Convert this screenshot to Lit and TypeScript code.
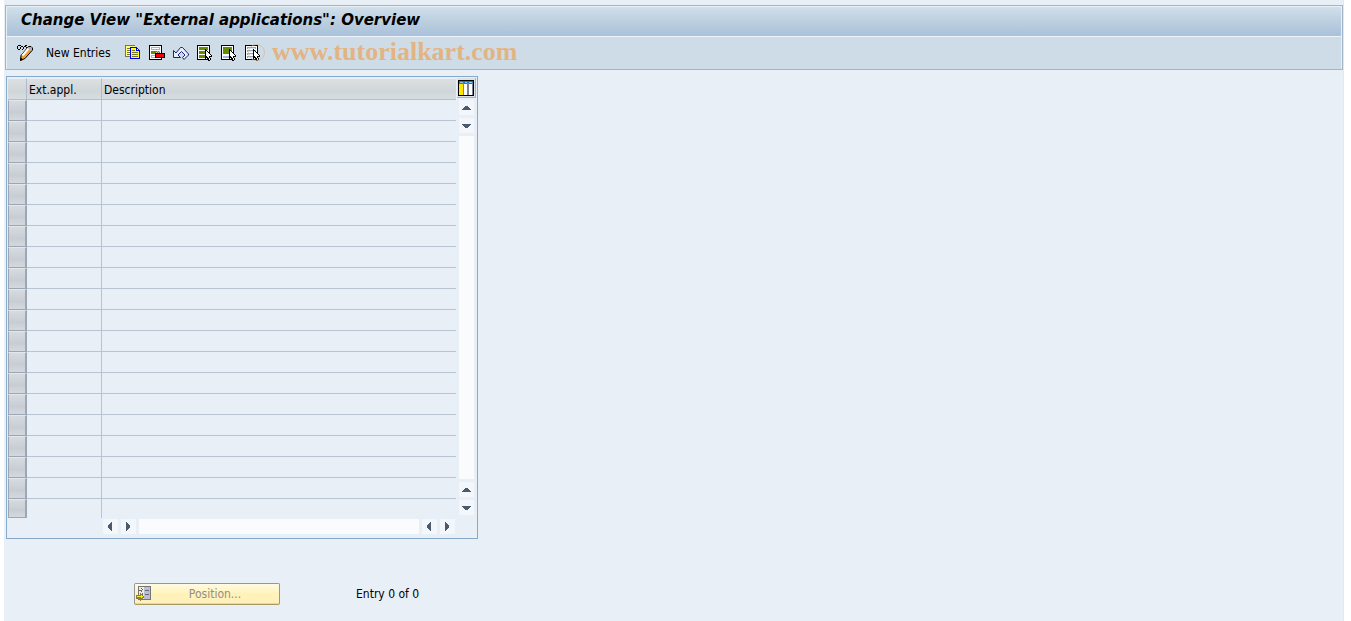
import { LitElement, html, svg, css } from "lit";
import { customElement, property } from "lit/decorators.js";

const icon = (content: unknown, size = 18) => html`
  <svg width=${size} height=${size} viewBox="0 0 ${size} ${size}" shape-rendering="crispEdges" aria-hidden="true">${content}</svg>`;

const page = svg`
  <path d="M1 1h13v15H1z" fill="#000"/>
  <path d="M2 2h11v13H2z" fill="#fff"/>`;
const pointer = svg`
  <path d="M9 5h1v1h1v1h1v1h1v1h1v1h1v1h1v2h-2v1h1v2h-1v1h-2v-2h-1v-1h-1v1H9z" fill="#000"/>
  <path d="M10 7h1v1h1v1h1v1h1v1h1v1h-2v2h1v2h-1v-2h-1v-1h-1v-1h-1z" fill="#fff"/>`;

const icons = {
  toggle: icon(svg`
    <path d="M1 2h1v1H1zM2 1h3v1H2zM1 3h1v2H1zM2 5h2v1H2zM4 3h1v2H4zM5 2h2v1H5zM7 3h1v2H7zM6 5h1v1H6zM8 2h2v1H8zM9 1h2v1H9zM10 3h1v1h-1z" fill="#000"/>
    <g shape-rendering="auto">
      <path d="M12.500 2.500h2.500l1.500 1.500v2l-7.500 8.500-4.500 2 .5-5z" fill="#f6a02c" stroke="#000"/>
      <path d="M12.500 4.500l-6 7" stroke="#fff" stroke-width="2"/>
      <path d="M12 4l1-1h2l1 1v2l-1 1z" fill="#9db4df"/>
      <path d="M4 17l.8-3.500 2.500 2z" fill="#000"/>
    </g>`),
  copy: icon(svg`
    <path d="M1 1h10v12H1z" fill="#ffff78"/>
    <path d="M1 1h10v1H1zM1 2h1v11H1zM2 12h5v1H2z" fill="#777740"/>
    <path d="M3 4h3v1H3zM3 6h3v1H3zM3 8h3v1H3zM3 10h3v1H3z" fill="#77773c"/>
    <path d="M6 3h7v1h1v1h1v1h1v9H6z" fill="#0000e8"/>
    <path d="M7 4h5v3h3v7H7z" fill="#ffff20"/>
    <path d="M13 5h1v1h-1z" fill="#fff"/>
    <path d="M8 6h3v1H8zM8 8h6v1H8zM8 10h6v1H8zM8 12h6v1H8z" fill="#77771c"/>`),
  remove: icon(svg`${page}
    <path d="M3 3h9v3H3zM3 11h9v3H3z" fill="#a4b4d0"/>
    <path d="M4 4h7v1H4zM4 12h7v1H4z" fill="#fff"/>
    <path d="M3 7h9v3H3z" fill="#668c00"/>
    <path d="M9 7h1v1H9zM8 8h1v1H8zM10 8h1v1h-1zM11 7h1v1h-1z" fill="#bdd28b"/>
    <path d="M7 9h10v5H7z" fill="#000"/><path d="M8 10h8v3H8z" fill="#f00000"/>`),
  undo: icon(svg`
    <path d="M1.500 6.500v7h7l-2.500-2.500 3.500-3.500 3.500 3.500-2.500 2.500 1.500 2 4.500-4.500v-1l-6-6.500h-2l-4.500 5.500z"
      shape-rendering="auto" fill="#e7eff8" stroke="#202080"/>`),
  selectAll: icon(svg`${page}
    <path d="M3 3h9v3H3zM3 7h9v3H3zM3 11h9v3H3z" fill="#668c00"/>${pointer}`),
  selectBlock: icon(svg`${page}
    <path d="M3 3h9v7H3z" fill="#668c00"/>
    <path d="M3 12h9v2H3z" fill="#a4b9d0"/>${pointer}`),
  deselect: icon(svg`${page}
    <path d="M3 3h9v2H3zM3 6h9v2H3zM3 9h9v2H3zM3 12h9v2H3z" fill="#8fa6bd"/>
    <path d="M4 4h7v1H4zM4 7h7v1H4zM4 10h7v1H4zM4 13h7v1H4z" fill="#dfe9f2"/>${pointer}`),
  columns: icon(svg`
    <path d="M1 1h16v16H1z" fill="#000"/>
    <path d="M2 2h14v3H2z" fill="#2779bd"/>
    <path d="M2 5h5v11H2z" fill="#ffe500"/>
    <path d="M7 5h4v11H7zM12 5h4v11h-4z" fill="#fff"/>
    <path d="M6 4h1v12H6zM10 4h2v12h-2zM15 4h1v12h-1z" fill="#7d828c"/>
    <path d="M3 3h3v1H3zM8 3h2v1H8zM12 3h3v1h-3z" fill="#8cc8f4"/>`),
  position: icon(svg`
    <path d="M3 1h13v14H3z" fill="#74747c"/>
    <path d="M4 2h5v12H4z" fill="#eeeed8"/><path d="M9 2h6v12H9z" fill="#babed2"/>
    <path d="M4 5h3v1H4zM6 3h1v1H6zM7 4h1v1H7zM6 6h1v1H6zM10 5h4v1h-4zM10 9h4v1h-4zM7 8h1v3H7z" fill="#666878"/>
    <path d="M1 10h4V8h1v1h1v1h1v1h1v2H8v1H7v1H6v1H5v-2H1z" fill="#877d46"/>
    <path d="M2 11h4v-1h1v1h1v1H7v1H6v-1H2z" fill="#fff200"/>`),
};

const arrows: Record<string, string> = {
  up: "M3 10h9v-1h-1V8h-1V7H9V6H6v1H5v1H4v1H3z",
  down: "M3 6h9v1h-1v1h-1v1H9v1H6V9H5V8H4V7H3z",
  left: "M9 3v9H8v-1H7v-1H6V9H5V6h1V5h1V4h1V3z",
  right: "M5 3v9h1v-1h1v-1h1V9h1V6H8V5H7V4H6V3z",
};

@customElement("scroll-strip")
class ScrollStrip extends LitElement {
  @property({ type: Boolean, reflect: true }) vertical = false;

  static styles = css`
    :host { display: flex; gap: 3px; }
    :host([vertical]) { flex-direction: column; }
    button {
      flex: none; width: 15px; height: 15px; padding: 0; border: 0;
      background: #f3f7fb; line-height: 0;
    }
    .track { flex: 1; min-width: 15px; min-height: 15px; background: #fafbfc; }
  `;

  private arrow(direction: string) {
    return html`<button type="button" aria-label="Scroll ${direction}">
      ${icon(svg`<path d=${arrows[direction]} fill="#4a5b6d"/>`, 15)}
    </button>`;
  }

  render() {
    const back = this.vertical ? "up" : "left";
    const forward = this.vertical ? "down" : "right";
    return html`${this.arrow(back)}${this.arrow(forward)}
      <div class="track"></div>${this.arrow(back)}${this.arrow(forward)}`;
  }
}

@customElement("app-root")
class AppRoot extends LitElement {
  static styles = css`
    * { box-sizing: border-box; }
    :host {
      display: flex; min-height: 100vh; padding: 0 7px 0 4px; box-sizing: border-box;
      background: #fff; color: #000;
      font: 12px/16px "DejaVu Sans Condensed", "Noto Sans", sans-serif;
    }
    button { font: inherit; color: inherit; }
    .window {
      flex: 1; min-width: 0; padding: 5px 0 0 1px; background: #e8eff6;
      border-right: 1px solid #e0e8f0;
    }
    .head {
      position: relative; border: 1px solid #a2b4c8;
      box-shadow: inset 1px 1px #e8f0f6, inset -1px 0 #e8f0f6;
      background: #cedce7;
    }
    h1 {
      margin: 1px 1px 0; padding: 2px 14px 0; height: 29px;
      font: italic bold 15px/22px "DejaVu Sans", sans-serif;
      background: linear-gradient(#d0dfec, #bccfdf 50%, #a9c1dc);
    }
    .toolbar {
      display: flex; align-items: center; height: 33px; padding: 0 7px;
      margin: 0 1px; border-top: 1px solid #edf4f9;
    }
    .toolbar button {
      padding: 0; border: 0; background: none; width: 24px; height: 24px;
      display: flex; align-items: center; justify-content: center;
    }
    .toolbar .text { width: auto; padding: 0 10px; }
    .toolbar .toggle { width: 22px; }
    .watermark {
      position: absolute; left: 242px; bottom: 2px; pointer-events: none;
      font: bold 26px/30px "Liberation Serif", serif; color: #e3b483;
      display: flex; align-items: center; gap: 7px;
    }
    .ring {
      width: 17px; height: 17px; border: 1px solid #e3b483; border-radius: 50%; opacity: .7;
    }
    .panel {
      display: inline-grid; grid-template-columns: auto 19px; gap: 0 1px;
      margin: 6px 1px 0; padding: 1px; border: 1px solid #87a9ca;
    }
    table { border-collapse: separate; border-spacing: 0; table-layout: fixed; width: 448px; }
    .c-sel { width: 19px; } .c-ext { width: 75px; }
    th {
      height: 22px; padding: 2px 2px 0; text-align: left; font-weight: normal;
      background: linear-gradient(#dce0e2, #d0d5d9 60%, #d8dde2);
      border-right: 1px solid #aebbc9; border-bottom: 1px solid #b4bfcb;
      border-top: 1px solid #e8eff6;
    }
    td { height: 21px; padding: 0; border-right: 1px solid #b9c4d3; border-bottom: 1px solid #b9c4d3; }
    th:last-child, td:last-child { border-right: 0; }
    .sel { padding: 0; border: 0; }
    .sel button {
      display: block; width: 100%; height: 21px; padding: 0;
      border: 1px solid #9ba7b6; border-top-color: #e4e8ec; border-right-width: 2px;
      background: linear-gradient(#d7dbdf, #c8cdd5 60%, #d5d9de);
    }
    tr:last-child td { height: 19px; border-bottom: 0; }
    tr:last-child button { height: 19px; }
    .side { display: flex; flex-direction: column; }
    .config {
      width: 19px; height: 20px; padding: 0; border: 0; line-height: 0;
      border-right: 1px solid #a5b2bf; border-bottom: 1px solid #a5b2bf; background: #dce2e8;
    }
    .side scroll-strip { flex: 1; margin: 2px 0 3px 2px; width: 15px; }
    .across { margin: 1px 1px 3px 95px; }
    .footer { display: flex; align-items: center; gap: 76px; margin: 44px 0 0 129px; }
    .position {
      display: flex; align-items: center; width: 146px; height: 22px; padding: 0;
      border: 1px solid #979797; border-bottom-color: #a99962; border-radius: 2px;
      background: linear-gradient(#fffbe2, #fff2b8 50%, #fff0bd); color: #938e82;
      box-shadow: inset 0 -1px #e8d79a;
    }
    .position span { flex: 1; padding-right: 2px; text-align: center; }
  `;

  render() {
    return html`
      <main class="window">
        <header class="head">
          <h1>Change View "External applications": Overview</h1>
          <div class="toolbar">
            <button type="button" class="toggle" aria-label="Display or change">${icons.toggle}</button>
            <button type="button" class="text">New Entries</button>
            <button type="button" aria-label="Copy as">${icons.copy}</button>
            <button type="button" aria-label="Delete">${icons.remove}</button>
            <button type="button" aria-label="Undo change">${icons.undo}</button>
            <button type="button" aria-label="Select all">${icons.selectAll}</button>
            <button type="button" aria-label="Select block">${icons.selectBlock}</button>
            <button type="button" aria-label="Deselect all">${icons.deselect}</button>
          </div>
          <div class="watermark"><span class="ring"></span>www.tutorialkart.com</div>
        </header>
        <section class="panel">
          <table aria-label="External applications">
            <colgroup><col class="c-sel"><col class="c-ext"><col></colgroup>
            <thead><tr><th></th><th scope="col">Ext.appl.</th><th scope="col">Description</th></tr></thead>
            <tbody>
              ${Array.from({ length: 20 }, (_, i) => html`<tr>
                <td class="sel"><button type="button" aria-label="Select row ${i + 1}"></button></td>
                <td></td><td></td>
              </tr>`)}
            </tbody>
          </table>
          <div class="side">
            <button type="button" class="config" aria-label="Configure columns">${icons.columns}</button>
            <scroll-strip vertical></scroll-strip>
          </div>
          <scroll-strip class="across"></scroll-strip>
        </section>
        <footer class="footer">
          <button type="button" class="position" disabled>${icons.position}<span>Position...</span></button>
          <span>Entry 0 of 0</span>
        </footer>
      </main>`;
  }
}
